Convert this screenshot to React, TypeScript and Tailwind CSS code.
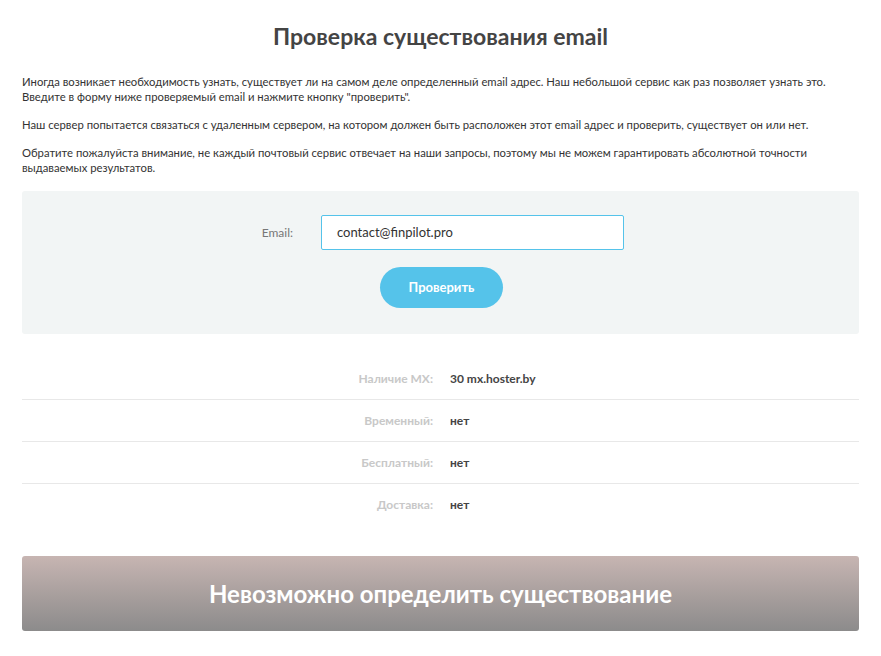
export default function App() {
  const rows = [
    ["Наличие MX:", "30 mx.hoster.by"],
    ["Временный:", "нет"],
    ["Бесплатный:", "нет"],
    ["Доставка:", "нет"],
  ];
  return (
    <div className="bg-white px-[22px] w-[881px] h-[656px] text-[#333]" style={{ fontFamily: "Lato, 'Open Sans', sans-serif" }}>
      <h1 className="pt-[21px] text-center text-[23px] font-bold text-[#444] leading-[30px]">Проверка существования email</h1>
      <div className="mt-[23px] text-[11.3px] leading-[15px] text-[#333]">
        <p>Иногда возникает необходимость узнать, существует ли на самом деле определенный email адрес. Наш небольшой сервис как раз позволяет узнать это.<br />Введите в форму ниже проверяемый email и нажмите кнопку "проверить".</p>
        <p className="mt-[13px]">Наш сервер попытается связаться с удаленным сервером, на котором должен быть расположен этот email адрес и проверить, существует он или нет.</p>
        <p className="mt-[13px]">Обратите пожалуйста внимание, не каждый почтовый сервис отвечает на наши запросы, поэтому мы не можем гарантировать абсолютной точности<br />выдаваемых результатов.</p>
      </div>
      <div className="mt-[16px] h-[143px] bg-[#f2f5f5] rounded-[3px] pt-[24px] flex flex-col">
        <div className="flex items-center pl-[211px]">
          <span className="w-[60px] text-[12px] text-[#777] text-right">Email:</span>
          <div className="ml-[28px] w-[303px] h-[35px] bg-white border border-solid border-[#55c3ea] rounded-[2px] flex items-center pl-[15px] text-[13px] text-[#333]" style={{ borderColor: "#55c3ea" }}>contact@finpilot.pro</div>
        </div>
        <div className="mt-[17px] ml-[358px] w-[123px] h-[41px] rounded-full bg-[#55c3ea] text-white text-[13px] font-bold flex items-center justify-center">Проверить</div>
      </div>
      <div className="mt-[24px]">
        {rows.map(([l, v], i) => (
          <div key={i} className={`flex items-center h-[42px] text-[12px] font-bold ${i < 3 ? "border-b border-[#e8e8e8]" : ""}`}>
            <span className="w-[411px] text-right text-[#c8c8c8]">{l}</span>
            <span className="ml-[17px] text-[#444]">{v}</span>
          </div>
        ))}
      </div>
      <div className="mt-[30px] h-[75px] rounded-[3px] bg-gradient-to-b from-[#c7b5b2] to-[#8c8b8b] flex items-center justify-center text-white text-[24px] font-bold">
        Невозможно определить существование
      </div>
    </div>
  );
}
